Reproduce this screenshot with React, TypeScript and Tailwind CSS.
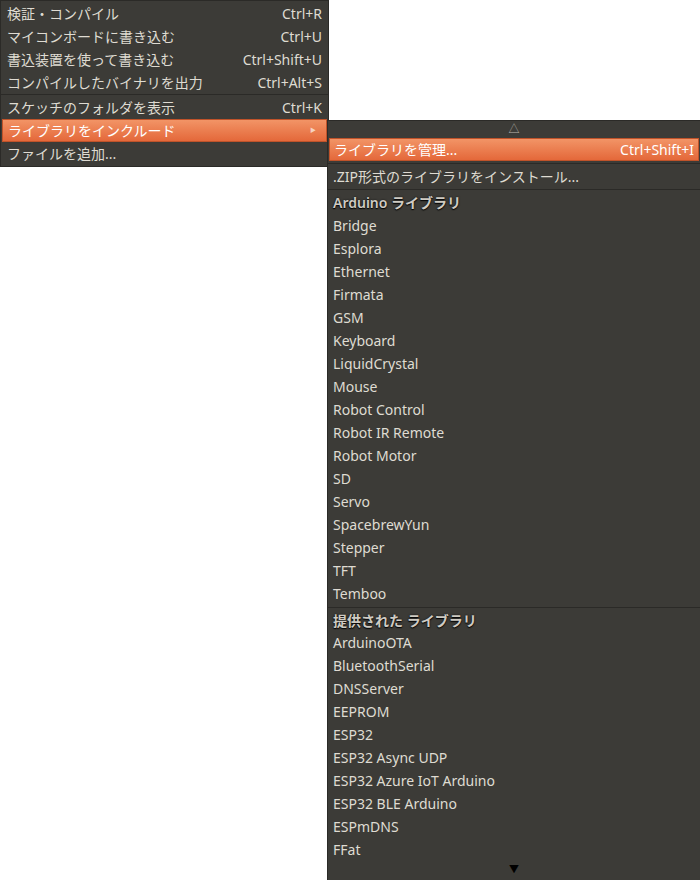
import React from 'react';

const font = { fontFamily: '"Noto Sans", "Noto Sans CJK JP", sans-serif' };

const mainItems: { label: string; shortcut?: string; sepBefore?: boolean; active?: boolean; sub?: boolean }[] = [
  { label: '検証・コンパイル', shortcut: 'Ctrl+R' },
  { label: 'マイコンボードに書き込む', shortcut: 'Ctrl+U' },
  { label: '書込装置を使って書き込む', shortcut: 'Ctrl+Shift+U' },
  { label: 'コンパイルしたバイナリを出力', shortcut: 'Ctrl+Alt+S' },
  { label: 'スケッチのフォルダを表示', shortcut: 'Ctrl+K', sepBefore: true },
  { label: 'ライブラリをインクルード', active: true, sub: true },
  { label: 'ファイルを追加...' },
];

const arduinoLibs = [
  'Bridge', 'Esplora', 'Ethernet', 'Firmata', 'GSM', 'Keyboard', 'LiquidCrystal', 'Mouse',
  'Robot Control', 'Robot IR Remote', 'Robot Motor', 'SD', 'Servo', 'SpacebrewYun', 'Stepper',
  'TFT', 'Temboo',
];

const contributedLibs = [
  'ArduinoOTA', 'BluetoothSerial', 'DNSServer', 'EEPROM', 'ESP32', 'ESP32 Async UDP',
  'ESP32 Azure IoT Arduino', 'ESP32 BLE Arduino', 'ESPmDNS', 'FFat',
];

// thin dark rule between groups; total height = 1px line + padding
function Separator({ pad = 'py-px' }: { pad?: string }) {
  return (
    <div className={pad}>
      <div className="h-px bg-[#2b2a27]" />
    </div>
  );
}

function Header({ children, h = 'h-[23px]' }: { children: React.ReactNode; h?: string }) {
  return (
    <div className={`flex ${h} items-center px-[5px] font-semibold text-[#cfcbc3] [text-shadow:0_0_2px_#111,0_1px_1px_#000]`}>
      {children}
    </div>
  );
}

function Row({ label }: { label: string }) {
  return <div className="flex h-[23px] items-center px-[5px] text-[#dfdbd2]">{label}</div>;
}

export default function App() {
  return (
    <div className="relative h-[880px] w-[700px] overflow-hidden bg-white text-[14px]" style={font}>
      <div className="absolute left-0 top-0 w-[329px] border border-[#2b2a27] bg-[#3c3b37] pb-[1px] pt-[1px]">
        {mainItems.map((it) => (
          <React.Fragment key={it.label}>
            {it.sepBefore && <Separator pad="pb-px" />}
            <div
              className={
                it.active
                  ? 'mx-[1px] flex h-[23px] items-center justify-between border border-[#c0532a] bg-[linear-gradient(180deg,#f29466_0%,#e4683a_100%)] px-[5px] text-white'
                  : 'flex h-[23px] items-center justify-between px-[6px] text-[#dfdbd2]'
              }
            >
              <span>{it.label}</span>
              {it.shortcut && <span>{it.shortcut}</span>}
              {it.sub && <span className="mr-[5px] text-[6px] text-[#f6d2c0]">▶</span>}
            </div>
          </React.Fragment>
        ))}
      </div>

      <div className="absolute left-[327px] top-[120px] h-[761px] w-[374px] border border-[#2b2a27] bg-[#3c3b37]">
        <div className="flex h-[17px] items-center justify-center text-[11px] text-[#b8b4ac]">△</div>
        <div className="mx-[1px] flex h-[23px] items-center justify-between border border-[#c0532a] bg-[linear-gradient(180deg,#f29466_0%,#e4683a_100%)] px-[4px] text-white">
          <span>ライブラリを管理...</span>
          <span>Ctrl+Shift+I</span>
        </div>
        <Separator pad="py-[1.5px]" />
        <Row label=".ZIP形式のライブラリをインストール..." />
        <Separator pad="py-px" />
        <Header>Arduino ライブラリ</Header>
        {arduinoLibs.map((l) => (
          <Row key={l} label={l} />
        ))}
        <Separator pad="py-[1.5px]" />
        <Header h="h-[22px]">提供された ライブラリ</Header>
        {contributedLibs.map((l) => (
          <Row key={l} label={l} />
        ))}
        <div className="flex h-[15px] items-center justify-center text-[10px] leading-none text-black">▼</div>
      </div>
    </div>
  );
}
